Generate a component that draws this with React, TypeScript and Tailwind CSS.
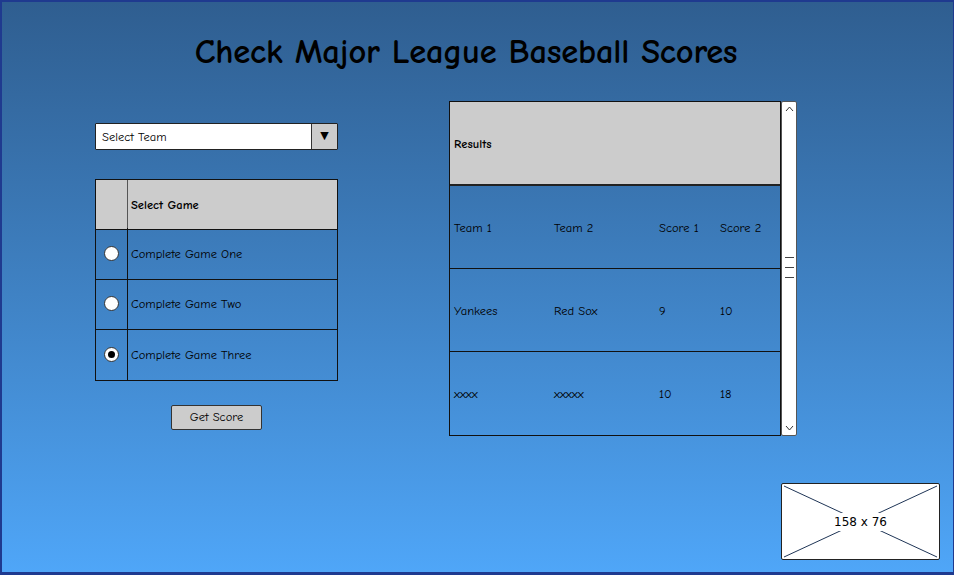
import React from "react";

const font = { fontFamily: '"Comic Sans MS", "Comic Neue", "DejaVu Sans", sans-serif' };

const games = [
  { label: "Complete Game One", checked: false },
  { label: "Complete Game Two", checked: false },
  { label: "Complete Game Three", checked: true },
];

const rows = [
  ["Team 1", "Team 2", "Score 1", "Score 2"],
  ["Yankees", "Red Sox", "9", "10"],
  ["xxxx", "xxxxx", "10", "18"],
];

function Radio({ checked }: { checked: boolean }) {
  return (
    <div className="w-[15px] h-[15px] rounded-full bg-white border border-[#333] flex items-center justify-center">
      {checked && <div className="w-[7px] h-[7px] rounded-full bg-black" />}
    </div>
  );
}

export default function App() {
  return (
    <div
      className="w-[954px] h-[575px] border-t-[2px] border-l-[2px] border-r-[1px] border-b-[3px] border-[#1f3a8f] bg-gradient-to-b from-[#2f5e90] to-[#4fa6f8] text-black"
      style={font}
    >
      <div className="h-[99px] flex items-center justify-center">
        <h1 className="text-[34.5px] font-bold leading-none tracking-[-0.2px] mt-[1px] mr-[23px]">Check Major League Baseball Scores</h1>
      </div>

      <div className="flex">
        {/* left column */}
        <div className="w-[447px] pl-[93px]">
          <div className="mt-[22px] w-[243px] h-[27px] flex border border-[#222] bg-white rounded-[1px]">
            <div className="flex-1 flex items-center pl-[6px] pt-[1px] text-[12.5px]">Select Team</div>
            <div className="w-[26px] border-l border-[#333] bg-[#cccccc] flex items-center justify-center text-[11px]">▼</div>
          </div>

          <div className="mt-[29px] w-[243px] border border-[#111]">
            <div className="h-[50px] flex bg-[#cccccc] border-b border-[#111]">
              <div className="w-[32px] border-r border-[#555]" />
              <div className="flex items-center pl-[3px] pt-[2px] text-[12.5px] font-bold">Select Game</div>
            </div>
            {games.map((g, i) => (
              <div key={g.label} className={`h-[50px] flex ${i < games.length - 1 ? "border-b border-[#111]" : ""}`}>
                <div className="w-[32px] border-r border-[#111] flex items-center justify-center -mt-[2px]">
                  <Radio checked={g.checked} />
                </div>
                <div className="flex items-center pl-[3px] text-[12.5px]">{g.label}</div>
              </div>
            ))}
          </div>

          <div className="mt-[24px] ml-[76px] w-[91px] h-[25px] bg-[#cccccc] border border-[#333] rounded-[2px] flex items-center justify-center text-[12.5px]">
            Get Score
          </div>
        </div>

        {/* right column */}
        <div>
          <div className="flex">
            <div className="w-[332px] border border-[#111]">
              <div className="h-[84px] bg-[#cccccc] border-b-[2px] border-[#222] flex items-center pl-[4px] pt-[2px] text-[12.5px] font-bold">
                Results
              </div>
              {rows.map((r, i) => (
                <div key={i} className={`h-[83px] flex items-center pl-[4px] pt-[2px] text-[12.5px] ${i < rows.length - 1 ? "border-b border-[#111]" : ""}`}>
                  <div className="w-[100px]">{r[0]}</div>
                  <div className="w-[105px]">{r[1]}</div>
                  <div className="w-[61px]">{r[2]}</div>
                  <div>{r[3]}</div>
                </div>
              ))}
            </div>
            <div className="w-[16px] bg-white border border-[#555] rounded-[2px] flex flex-col items-center">
              <svg width="9" height="6" viewBox="0 0 9 6" className="mt-[4px]">
                <path d="M1 5 L4.5 1 L8 5" fill="none" stroke="#333" strokeWidth="1" />
              </svg>
              <div className="flex flex-col gap-[9px] mt-[145px]">
                <div className="w-[9px] h-px bg-[#444]" />
                <div className="w-[9px] h-px bg-[#444]" />
                <div className="w-[9px] h-px bg-[#444]" />
              </div>
              <div className="flex-1" />
              <svg width="9" height="6" viewBox="0 0 9 6" className="mb-[4px]">
                <path d="M1 1 L4.5 5 L8 1" fill="none" stroke="#333" strokeWidth="1" />
              </svg>
            </div>
          </div>

          <div className="mt-[47px] ml-[332px] relative w-[159px] h-[77px] bg-white border border-[#222] rounded-[2px] flex items-center justify-center">
            <svg className="absolute inset-0" width="157" height="75" viewBox="0 0 157 75">
              <line x1="2" y1="2" x2="155" y2="73" stroke="#1f3556" strokeWidth="1" />
              <line x1="155" y1="2" x2="2" y2="73" stroke="#1f3556" strokeWidth="1" />
            </svg>
            <span className="relative bg-white px-[2px] text-[12px]" style={{ fontFamily: '"DejaVu Sans", sans-serif' }}>158 x 76</span>
          </div>
        </div>
      </div>
    </div>
  );
}
